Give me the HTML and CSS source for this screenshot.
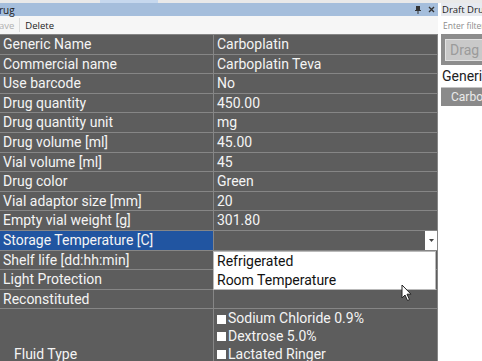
FILE: index.html
```html
<!DOCTYPE html>
<html lang="en">
<head>
    <meta charset="UTF-8">
    <meta name="viewport" content="width=device-width, initial-scale=1.0">
    <title>Drug</title>
    <link rel="stylesheet" href="styles.css">
</head>
<body>
    <div class="topstrip"><span class="tab"></span></div>
    <div class="main">
        <div class="editor">
            <div class="titlebar">
                <span class="title">rug</span>
                <span class="titlebtns">
                    <svg width="6" height="8" viewBox="0 0 6 8"><rect x="1" y="0" width="4" height="5" fill="#333"/><rect x="0" y="4" width="6" height="1" fill="#333"/><rect x="2.5" y="5" width="1" height="3" fill="#333"/></svg>
                    <svg width="7" height="7" viewBox="0 0 7 7"><path d="M1 1L6 6M6 1L1 6" stroke="#333" stroke-width="1.4"/></svg>
                </span>
            </div>
            <div class="toolbar">
                <span class="tb-btn disabled">ave</span>
                <span class="tb-sep"></span>
                <span class="tb-btn">Delete</span>
            </div>
            <div class="grid" id="grid">
                <div class="cell">Generic Name</div><div class="cell">Carboplatin</div>
                <div class="cell">Commercial name</div><div class="cell">Carboplatin Teva</div>
                <div class="cell">Use barcode</div><div class="cell">No</div>
                <div class="cell">Drug quantity</div><div class="cell">450.00</div>
                <div class="cell">Drug quantity unit</div><div class="cell">mg</div>
                <div class="cell">Drug volume [ml]</div><div class="cell">45.00</div>
                <div class="cell">Vial volume [ml]</div><div class="cell">45</div>
                <div class="cell">Drug color</div><div class="cell">Green</div>
                <div class="cell">Vial adaptor size [mm]</div><div class="cell">20</div>
                <div class="cell">Empty vial weight [g]</div><div class="cell">301.80</div>
                <div class="cell selected">Storage Temperature [C]</div>
                <div class="cell editing">
                    <span class="drop-btn"><svg width="5" height="3" viewBox="0 0 5 3"><path d="M0 0H5L2.5 3Z" fill="#444"/></svg></span>
                    <div class="dropdown">
                        <div class="opt">Refrigerated</div>
                        <div class="opt">Room Temperature</div>
                        <svg class="cursor" width="12" height="18" viewBox="0 0 12 18"><path d="M1 1V14L4 11L6.5 16.5L8.5 15.6L6 10.2H10Z" fill="#fff" stroke="#222" stroke-width="1"/></svg>
                    </div>
                </div>
                <div class="cell">Shelf life [dd:hh:min]</div><div class="cell"></div>
                <div class="cell">Light Protection</div><div class="cell"></div>
                <div class="cell">Reconstituted</div><div class="cell"></div>
                <div class="cell tall label">Fluid Type</div>
                <div class="cell tall checks">
                    <div class="check"><span class="box"></span>Sodium Chloride 0.9%</div>
                    <div class="check"><span class="box"></span>Dextrose 5.0%</div>
                    <div class="check"><span class="box"></span>Lactated Ringer</div>
                </div>
            </div>
        </div>
        <div class="side">
            <div class="side-title">Draft Drug</div>
            <div class="filter"><span class="filter-box">Enter filter</span></div>
            <div class="drag-area"><span class="drag-box">Drag</span></div>
            <div class="group-label">Generic</div>
            <div class="col-header">Carbo</div>
        </div>
    </div>
</body>
</html>
```

FILE: styles.css
```css
body {
    margin: 0;
    width: 482px;
    height: 361px;
    overflow: hidden;
    background-color: #fff;
    font-family: Roboto, "Noto Sans", sans-serif;
}
.topstrip {
    height: 3px;
    background-color: #e9e9e9;
}
.topstrip .tab {
    display: block;
    margin-left: 100px;
    width: 58px;
    height: 3px;
    background-color: #c6d8ee;
}
.main {
    display: flex;
}
.editor {
    width: 438px;
    flex-shrink: 0;
}
.titlebar {
    height: 13px;
    background-color: #a5bedc;
    display: flex;
    align-items: center;
    justify-content: space-between;
    font-family: "Open Sans", sans-serif;
    font-size: 10px;
    color: #1b1b1b;
    padding-right: 3px;
}
.titlebar .title {
    margin-left: -1px;
}
.titlebtns {
    display: flex;
    gap: 7px;
    align-items: center;
}
.toolbar {
    height: 18px;
    background-color: #f6f6f6;
    display: flex;
    align-items: center;
    font-family: "Open Sans", sans-serif;
    font-size: 9.5px;
    color: #222;
}
.tb-btn.disabled {
    color: #b0b0b0;
    margin-left: -1px;
}
.tb-sep {
    width: 1px;
    height: 14px;
    background-color: #dcdcdc;
    margin: 0 5px;
}
.grid {
    display: grid;
    grid-template-columns: 214px 224px;
    grid-auto-rows: auto;
    background-color: #5d5d5d;
    border-top: 1px solid #868686;
}
.cell {
    height: 18.6px;
    border-right: 1px solid #868686;
    border-bottom: 1px solid #868686;
    color: #f4f4f4;
    font-size: 14px;
    line-height: 18.6px;
    padding-left: 3px;
    white-space: nowrap;
    overflow: hidden;
}
.cell.selected {
    background-color: #2155a1;
}
.cell.editing {
    position: relative;
    overflow: visible;
    z-index: 2;
}
.drop-btn {
    position: absolute;
    right: 0;
    top: 0;
    width: 12px;
    height: 18.6px;
    background-color: #fff;
    display: flex;
    align-items: center;
    justify-content: center;
}
.dropdown {
    position: absolute;
    left: -1px;
    top: 19.6px;
    width: 221px;
    height: 37px;
    background-color: #fff;
    border: 1px solid #b9b9b9;
}
.opt {
    color: #111;
    font-size: 14px;
    line-height: 19px;
    padding-left: 3px;
}
.cursor {
    position: absolute;
    left: 187px;
    top: 32px;
}
.cell.tall {
    height: 90px;
}
.cell.label {
    display: flex;
    align-items: center;
    padding-left: 14px;
}
.checks {
    padding-top: 1px;
    box-sizing: border-box;
    height: 91px;
}
.check {
    display: flex;
    align-items: center;
    line-height: 17.6px;
}
.box {
    width: 9px;
    height: 9px;
    background-color: #fff;
    margin-right: 2px;
}
.side {
    flex: 1;
    margin-left: 3px;
    overflow: hidden;
}
.side-title {
    height: 13px;
    background-color: #e7eaef;
    font-family: "Open Sans", sans-serif;
    font-size: 9.5px;
    line-height: 13px;
    color: #1b1b1b;
    padding-left: 1px;
    white-space: nowrap;
}
.filter {
    height: 18px;
    display: flex;
    align-items: center;
    padding-left: 2px;
}
.filter-box {
    font-family: "Open Sans", sans-serif;
    font-size: 8.5px;
    color: #8c8c8c;
    white-space: nowrap;
}
.drag-area {
    height: 31px;
    background-color: #8d8d8d;
    padding: 5px 0 0 4px;
    box-sizing: border-box;
}
.drag-box {
    display: block;
    height: 20px;
    background-color: #c9c9c9;
    border: 1px solid #e2e2e2;
    border-right: none;
    color: #9b9b9b;
    font-size: 14px;
    line-height: 20px;
    padding-left: 4px;
}
.group-label {
    font-size: 14px;
    color: #222;
    line-height: 22px;
    padding-left: 1px;
    white-space: nowrap;
}
.col-header {
    height: 18px;
    background-color: #8a8a8a;
    border-top: 1px solid #c4c4c4;
    color: #eaeaea;
    font-size: 12px;
    line-height: 18px;
    padding-left: 10px;
    white-space: nowrap;
}
```
